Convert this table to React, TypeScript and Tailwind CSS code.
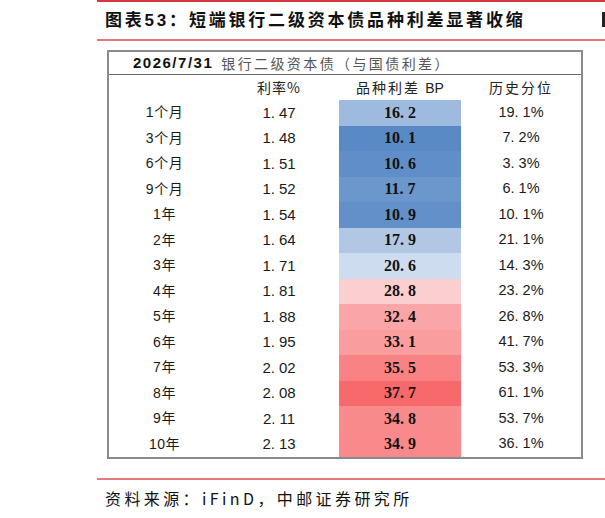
import React from "react";

type Row = { label: string; rate: string; spread: string; pct: string; bg: string };

const rows: Row[] = [
  { label: "1个月", rate: "1.47", spread: "16.2", pct: "19.1%", bg: "bg-[#9EBADE]" },
  { label: "3个月", rate: "1.48", spread: "10.1", pct: "7.2%", bg: "bg-[#5A8AC6]" },
  { label: "6个月", rate: "1.51", spread: "10.6", pct: "3.3%", bg: "bg-[#608EC8]" },
  { label: "9个月", rate: "1.52", spread: "11.7", pct: "6.1%", bg: "bg-[#6C97CC]" },
  { label: "1年", rate: "1.54", spread: "10.9", pct: "10.1%", bg: "bg-[#6390C9]" },
  { label: "2年", rate: "1.64", spread: "17.9", pct: "21.1%", bg: "bg-[#B1C7E4]" },
  { label: "3年", rate: "1.71", spread: "20.6", pct: "14.3%", bg: "bg-[#CEDCEF]" },
  { label: "4年", rate: "1.81", spread: "28.8", pct: "23.2%", bg: "bg-[#FBCED0]" },
  { label: "5年", rate: "1.88", spread: "32.4", pct: "26.8%", bg: "bg-[#FAA5A7]" },
  { label: "6年", rate: "1.95", spread: "33.1", pct: "41.7%", bg: "bg-[#F99D9F]" },
  { label: "7年", rate: "2.02", spread: "35.5", pct: "53.3%", bg: "bg-[#F98284]" },
  { label: "8年", rate: "2.08", spread: "37.7", pct: "61.1%", bg: "bg-[#F8696B]" },
  { label: "9年", rate: "2.11", spread: "34.8", pct: "53.7%", bg: "bg-[#F98A8C]" },
  { label: "10年", rate: "2.13", spread: "34.9", pct: "36.1%", bg: "bg-[#F9898B]" },
];

function Dotted({ v }: { v: string }) {
  const i = v.indexOf(".");
  return (
    <>
      {v.slice(0, i + 1)}
      <span className="ml-[4px]">{v.slice(i + 1)}</span>
    </>
  );
}

const sans = "font-['Liberation_Sans','Noto_Sans_CJK_SC',sans-serif]";
const cjk = "font-['Noto_Sans_CJK_SC',sans-serif]";

export default function App() {
  return (
    <div className="relative w-[605px] h-[518px] overflow-hidden bg-white">
      <div className="ml-[97px]">
        <div className="h-[2px] bg-[#d8353b]" />
        <div
          className={`h-[37px] flex items-center pl-[8px] text-[17px] font-bold tracking-[2.8px] text-[#111] ${sans}`}
        >
          图表53：短端银行二级资本债品种利差显著收缩
        </div>
        <div className="h-[2px] bg-[#e07a7b]" />

        <div className="pt-[9px] pl-[10px]">
          <div className="w-[476px] border-2 border-[#8a8a8a] bg-white">
            <div className="h-[23px] flex items-center pl-[24px] border-b border-[#6a6a6a]">
              <span className={`text-[15px] font-bold tracking-[1.5px] text-[#111] ${sans}`}>2026/7/31</span>
              <span className={`ml-[8px] text-[14px] tracking-[2.4px] text-[#555] ${cjk}`}>
                银行二级资本债（与国债利差）
              </span>
            </div>
            <div className={`grid grid-cols-[107px_123px_122px_120px] h-[25px] items-center text-[14px] text-[#222] ${cjk}`}>
              <div />
              <div className="text-center tracking-[1px] pl-[3px]">利率%</div>
              <div className="text-center tracking-[2px]">
                品种利差 <span className="font-['Liberation_Sans'] tracking-normal">BP</span>
              </div>
              <div className="text-center tracking-[2px]">历史分位</div>
            </div>
            {rows.map((r) => (
              <div
                key={r.label}
                className="grid grid-cols-[107px_123px_122px_120px] h-[25.5px] items-center text-[#1a1a1a]"
              >
                <div className={`text-center text-[14px] tracking-[0.5px] pl-[4px] ${sans}`}>{r.label}</div>
                <div className={`text-center text-[15px] pl-[3px] ${sans}`}>
                  <Dotted v={r.rate} />
                </div>
                <div
                  className={`h-full flex items-center justify-center text-[16px] font-bold text-[#111] font-['Liberation_Serif',serif] ${r.bg}`}
                >
                  <span>
                    <Dotted v={r.spread} />
                  </span>
                </div>
                <div className={`text-center text-[14.5px] ${sans}`}>
                  <Dotted v={r.pct} />
                </div>
              </div>
            ))}
          </div>
        </div>

        <div className="mt-[19px] h-[2px] bg-[#e07a7b]" />
        <div className={`h-[36px] flex items-center pl-[8px] text-[16px] tracking-[3.4px] text-[#111] ${cjk}`}>
          资料来源：iFinD，中邮证券研究所
        </div>
      </div>
      <div className="absolute left-[602px] top-[12px] w-[3px] h-[15px] bg-[#222]" />
    </div>
  );
}
